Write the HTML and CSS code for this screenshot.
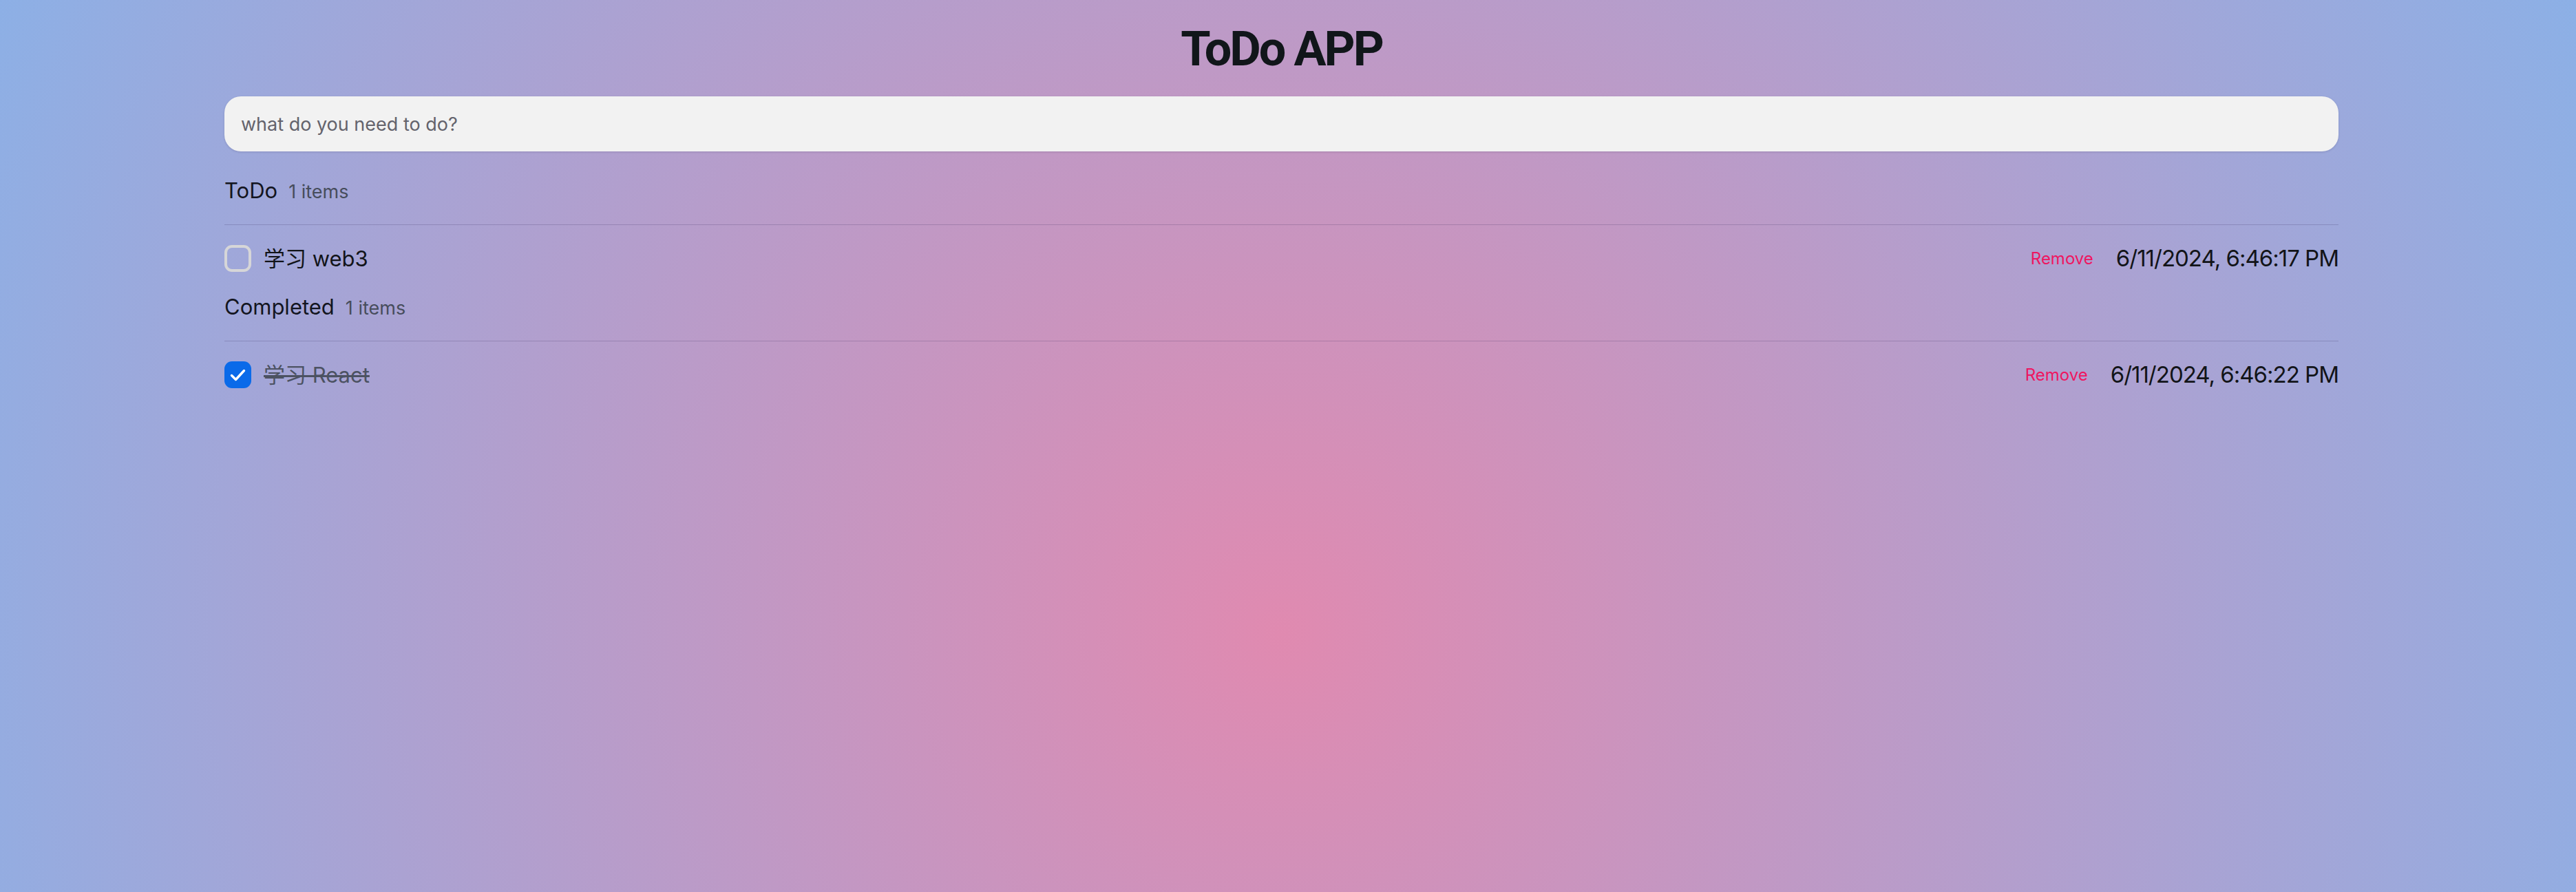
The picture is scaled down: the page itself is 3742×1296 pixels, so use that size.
FILE: index.html
```html
<!DOCTYPE html>
<html lang="en">
<head>
<meta charset="utf-8">
<title>ToDo APP</title>
<link rel="stylesheet" href="styles.css">
</head>
<body>
<div class="page">
  <main class="app">
    <h1 class="title">ToDo APP</h1>
    <input class="new-todo" type="text" placeholder="what do you need to do?">
    <div class="sections">
      <section class="section">
        <header class="section-head">
          <span class="section-title">ToDo</span>
          <span class="section-count">1 items</span>
        </header>
        <ul class="list">
          <li class="item">
            <div class="item-left">
              <span class="check"></span>
              <span class="item-text">学习 web3</span>
            </div>
            <div class="item-right">
              <button class="remove" type="button">Remove</button>
              <span class="date">6/11/2024, 6:46:17 PM</span>
            </div>
          </li>
        </ul>
      </section>
      <section class="section">
        <header class="section-head">
          <span class="section-title">Completed</span>
          <span class="section-count">1 items</span>
        </header>
        <ul class="list">
          <li class="item done">
            <div class="item-left">
              <span class="check checked">
                <svg viewBox="0 0 39 39" width="39" height="39" aria-hidden="true"><path d="M10.5 20.5 L16.5 26.5 L28.5 13.5" fill="none" stroke="#fff" stroke-width="3.4" stroke-linecap="round" stroke-linejoin="round"/></svg>
              </span>
              <span class="item-text">学习 React</span>
            </div>
            <div class="item-right">
              <button class="remove" type="button">Remove</button>
              <span class="date">6/11/2024, 6:46:22 PM</span>
            </div>
          </li>
        </ul>
      </section>
    </div>
  </main>
</div>
</body>
</html>
```
FILE: styles.css
```css
html, body {
  margin: 0;
  padding: 0;
  height: 100%;
}
body {
  background: radial-gradient(circle farthest-corner at 1861px 920px, #e08ab0 0%, #8cb0e6 100%);
  background-attachment: fixed;
  font-family: "Inter", "Noto Sans CJK SC", sans-serif;
  color: #111318;
}
.page {
  padding-right: 19px;
  min-height: 100%;
  box-sizing: border-box;
}
.app {
  width: 3071px;
  margin: 0 auto;
  display: flex;
  flex-direction: column;
}
.title {
  margin: 0;
  padding-top: 36px;
  font-family: "Roboto", sans-serif;
  font-weight: 700;
  font-size: 70px;
  line-height: 70px;
  letter-spacing: -3px;
  text-align: center;
  color: #11161a;
}
.new-todo {
  margin-top: 34px;
  height: 80px;
  box-sizing: border-box;
  padding: 0 24px;
  border: none;
  border-radius: 24px;
  background: #f2f2f2;
  box-shadow: 0 1px 3px rgba(40, 40, 80, 0.18);
  font-family: "Inter", sans-serif;
  font-size: 27px;
  color: #222;
  outline: none;
}
.new-todo::placeholder {
  color: #64636c;
}
.sections {
  margin-top: 37px;
  display: flex;
  flex-direction: column;
  gap: 31px;
}
.section-head {
  display: flex;
  align-items: baseline;
  gap: 16px;
  line-height: 39px;
  padding-bottom: 28px;
  border-bottom: 1px solid rgba(40, 30, 80, 0.2);
}
.section-title {
  font-size: 31px;
  color: #131520;
}
.section-count {
  font-size: 27px;
  color: #474d5c;
}
.list {
  list-style: none;
  margin: 0;
  padding: 0;
}
.item {
  display: flex;
  align-items: center;
  padding-top: 29px;
  line-height: 39px;
}
.item-left {
  display: flex;
  align-items: center;
  gap: 18px;
}
.check {
  width: 39px;
  height: 39px;
  box-sizing: border-box;
  border: 4px solid #d6d6d8;
  border-radius: 11px;
  display: block;
}
.check.checked {
  border: none;
  background: #0a6ae9;
}
.check svg {
  display: block;
}
.item-text {
  font-size: 31px;
  line-height: 39px;
  color: #121419;
}
.done .item-text {
  color: #4c5262;
  text-decoration: line-through;
  text-decoration-thickness: 3px;
}
.item-right {
  margin-left: auto;
  display: flex;
  align-items: center;
  gap: 33px;
}
.remove {
  border: none;
  background: none;
  padding: 0;
  font-family: "Inter", sans-serif;
  font-size: 24px;
  line-height: 39px;
  color: #ee1660;
  cursor: pointer;
}
.date {
  font-size: 33px;
  line-height: 39px;
  letter-spacing: -1px;
  color: #121418;
}
```
